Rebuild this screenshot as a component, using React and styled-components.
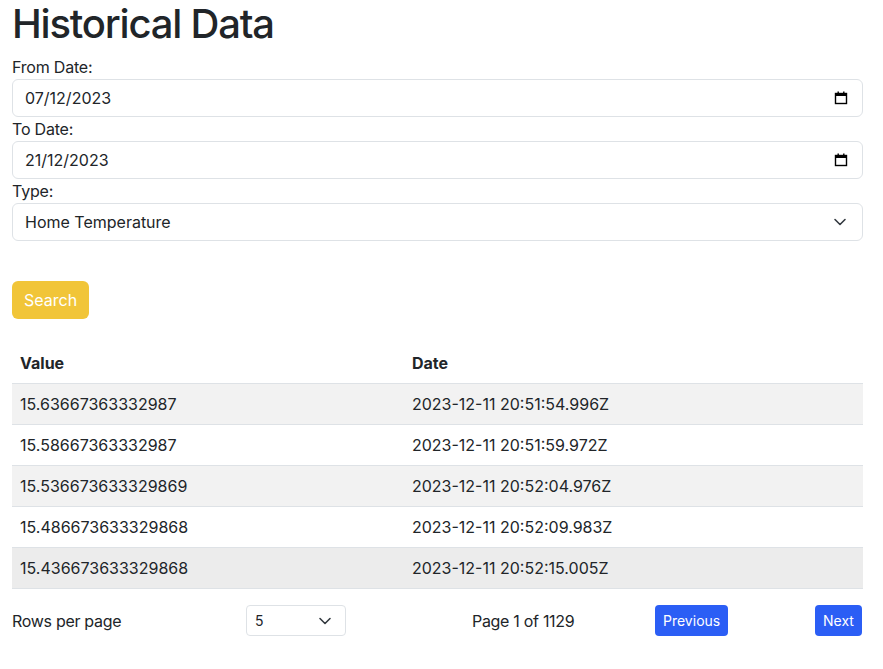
import React, { useState } from 'react';
import styled, { createGlobalStyle } from 'styled-components';

const rows = [
  { value: '15.63667363332987', date: '2023-12-11 20:51:54.996Z' },
  { value: '15.58667363332987', date: '2023-12-11 20:51:59.972Z' },
  { value: '15.536673633329869', date: '2023-12-11 20:52:04.976Z' },
  { value: '15.486673633329868', date: '2023-12-11 20:52:09.983Z' },
  { value: '15.436673633329868', date: '2023-12-11 20:52:15.005Z' },
];

const CalendarIcon = () => (
  <svg width="14" height="14" viewBox="0 0 14 14">
    <rect x="1.5" y="2.5" width="11" height="10" fill="none" stroke="#000" strokeWidth="1.4" />
    <rect x="1" y="2" width="12" height="3" fill="#000" />
    <rect x="3.5" y="0.5" width="1.4" height="2.5" fill="#000" />
    <rect x="9.1" y="0.5" width="1.4" height="2.5" fill="#000" />
  </svg>
);

const Chevron = ({ size = 16 }) => (
  <svg width={size} height={size * 0.75} viewBox="0 0 16 12">
    <path d="M3 3.5l5 5 5-5" fill="none" stroke="#343a40" strokeWidth="1.6" strokeLinecap="round" strokeLinejoin="round" />
  </svg>
);

const HistoricalData = () => {
  const [page] = useState(1);

  return (
    <Page>
      <Title>Historical Data</Title>
      <Label>From Date:</Label>
      <Field>
        <span>07/12/2023</span>
        <CalendarIcon />
      </Field>
      <Label>To Date:</Label>
      <Field>
        <span>21/12/2023</span>
        <CalendarIcon />
      </Field>
      <Label>Type:</Label>
      <Field>
        <span>Home Temperature</span>
        <Chevron />
      </Field>
      <SearchButton>Search</SearchButton>

      <Table>
        <thead>
          <tr>
            <Th style={{ width: 392 }}>Value</Th>
            <Th>Date</Th>
          </tr>
        </thead>
        <tbody>
          {rows.map((r, i) => (
            <Tr key={r.value} shade={i === 4 ? 'hover' : i % 2 === 0 ? 'stripe' : 'none'}>
              <Td>{r.value}</Td>
              <Td>{r.date}</Td>
            </Tr>
          ))}
        </tbody>
      </Table>

      <Pager>
        <PagerText>Rows per page</PagerText>
        <SmallSelect>
          <span>5</span>
          <Chevron />
        </SmallSelect>
        <PagerText>Page {page} of 1129</PagerText>
        <BlueButton>Previous</BlueButton>
        <BlueButton>Next</BlueButton>
      </Pager>
    </Page>
  );
};

export default function App() {
  return (
    <>
      <GlobalStyle />
      <HistoricalData />
    </>
  );
}

const GlobalStyle = createGlobalStyle`
  body {
    margin: 0;
    background: #fff;
    color: #212529;
    font-family: Inter, "Noto Sans", sans-serif;
    font-size: 16px;
    line-height: 1.5;
  }
  * {
    box-sizing: border-box;
  }
`;

const Page = styled.div`
  padding: 0 20px 0 12px;
`;

const Title = styled.h1`
  margin: 0 0 7px;
  font-size: 40px;
  font-weight: 500;
  line-height: 1.2;
  letter-spacing: -1.2px;
`;

const Label = styled.div`
  font-size: 16px;
  line-height: 24px;
  letter-spacing: -0.2px;
`;

const Field = styled.div`
  display: flex;
  align-items: center;
  justify-content: space-between;
  height: 38px;
  padding: 0 14px 0 12px;
  border: 1px solid #dee2e6;
  border-radius: 6px;
  font-size: 16px;
`;

const SearchButton = styled.button`
  display: block;
  margin-top: 40px;
  height: 38px;
  padding: 0 12px;
  border: none;
  border-radius: 6px;
  background: #f1c538;
  color: #fff;
  font-family: inherit;
  font-size: 16px;
`;

const Table = styled.table`
  width: 100%;
  margin: 24px 0 16px;
  border-collapse: collapse;
`;

const Th = styled.th`
  padding: 8px;
  text-align: left;
  font-weight: 700;
  border-bottom: 1px solid #dee2e6;
`;

const Tr = styled.tr`
  background: ${(p) =>
    p.shade === 'stripe' ? '#f2f2f2' : p.shade === 'hover' ? '#ececec' : '#fff'};
`;

const Td = styled.td`
  padding: 8px;
  height: 41px;
  border-bottom: 1px solid #dee2e6;
`;

const Pager = styled.div`
  display: grid;
  grid-template-columns: 234px 226px 183px 160px auto;
  align-items: center;
`;

const PagerText = styled.span`
  font-size: 16px;
  letter-spacing: -0.3px;
`;

const SmallSelect = styled.div`
  display: flex;
  align-items: center;
  justify-content: space-between;
  width: 100px;
  height: 31px;
  padding: 0 12px 0 8px;
  border: 1px solid #dee2e6;
  border-radius: 4px;
  font-size: 14px;
`;

const BlueButton = styled.button`
  justify-self: start;
  height: 31px;
  padding: 0 8px;
  border: none;
  border-radius: 4px;
  background: #2b5ef5;
  color: #fff;
  font-family: inherit;
  font-size: 14px;
`;
